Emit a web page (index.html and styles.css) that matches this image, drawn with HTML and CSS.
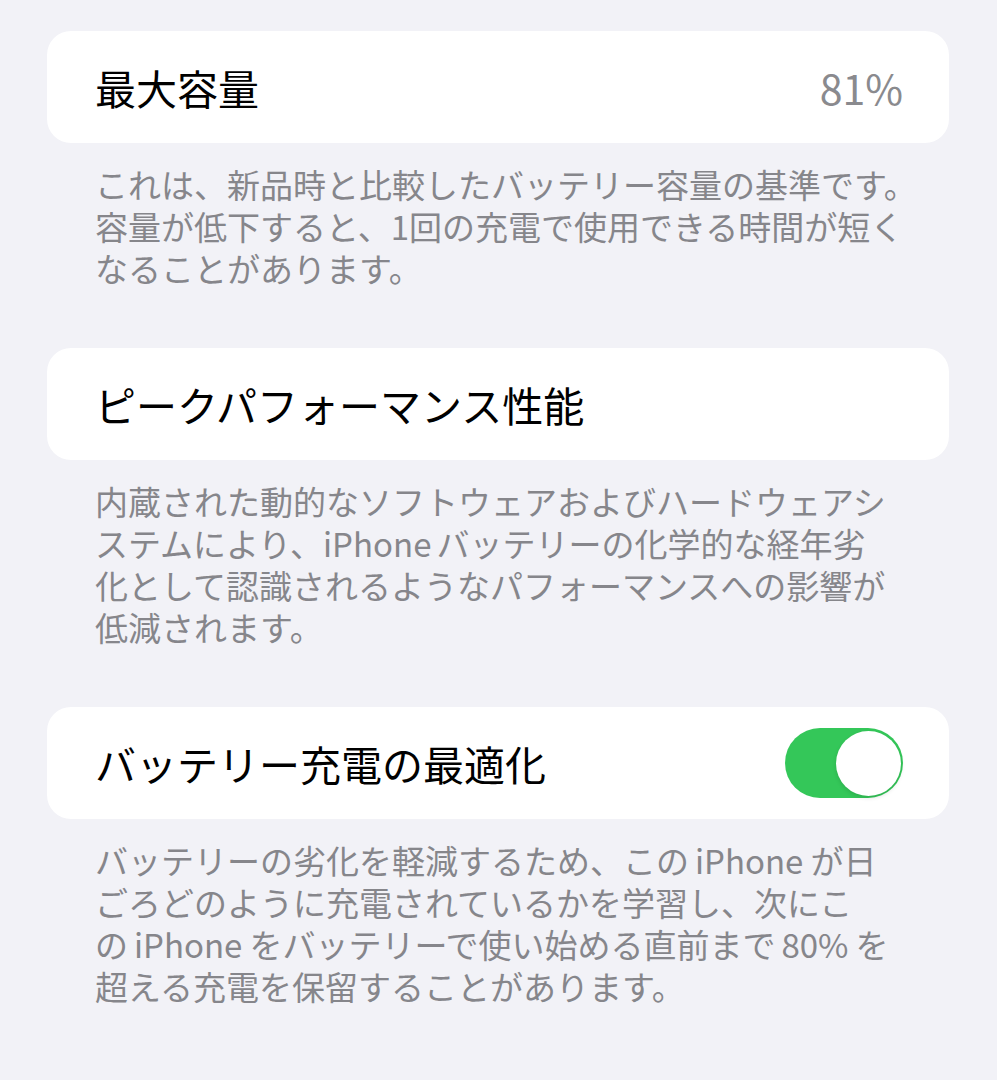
FILE: index.html
```html
<!DOCTYPE html>
<html lang="ja">
<head>
    <meta charset="UTF-8">
    <meta name="viewport" content="width=device-width, initial-scale=1.0">
    <title>バッテリーの状態</title>
    <link rel="stylesheet" href="styles.css">
</head>
<body>
    <div class="page">
        <div class="group">
            <div class="cell">
                <span class="cell-label">最大容量</span>
                <span class="cell-value">81%</span>
            </div>
            <p class="footer">これは、新品時と比較したバッテリー容量の基準です。<br>容量が低下すると、1回の充電で使用できる時間が短く<br>なることがあります。</p>
        </div>

        <div class="group">
            <div class="cell">
                <span class="cell-label">ピークパフォーマンス性能</span>
            </div>
            <p class="footer">内蔵された動的なソフトウェアおよびハードウェアシ<br>ステムにより、<span class="lat no-left">iPhone</span>バッテリーの化学的な経年劣<br>化として認識されるようなパフォーマンスへの影響が<br>低減されます。</p>
        </div>

        <div class="group">
            <div class="cell">
                <span class="cell-label">バッテリー充電の最適化</span>
                <span class="switch on"><span class="knob"></span></span>
            </div>
            <p class="footer">バッテリーの劣化を軽減するため、この<span class="lat">iPhone</span>が日<br>ごろどのように充電されているかを学習し、次にこ<br>の<span class="lat">iPhone</span>をバッテリーで使い始める直前まで<span class="lat">80%</span>を<br>超える充電を保留することがあります。</p>
        </div>
    </div>
</body>
</html>
```

FILE: styles.css
```css
body {
    margin: 0;
    background-color: #f2f2f7;
    font-family: "Noto Sans CJK JP", "Noto Sans", sans-serif;
}
.page {
    padding: 31px 48px 0 47px;
}
.group {
    margin-bottom: 59px;
}
.cell {
    display: flex;
    align-items: center;
    justify-content: space-between;
    height: 112px;
    padding: 0 46px 0 48px;
    background-color: #fff;
    border-radius: 24px;
}
.cell-label {
    font-size: 41px;
    color: #000;
    white-space: nowrap;
}
.cell-value {
    font-size: 41px;
    color: #8a8a8e;
}
.footer {
    margin: 0;
    padding: 20px 48px 0 48px;
    font-size: 33px;
    line-height: 42px;
    color: #86868b;
    white-space: nowrap;
}
/* 和文と欧文の間のアキ */
.lat {
    display: inline-block;
    margin: 0 7px 0 6px;
}
.lat.no-left {
    margin-left: 0;
    margin-right: 5px;
}
.switch {
    display: flex;
    align-items: center;
    justify-content: flex-end;
    width: 118px;
    height: 70px;
    padding: 0 2px;
    box-sizing: border-box;
    border-radius: 35px;
    background-color: #e9e9eb;
}
.switch.on {
    background-color: #34c759;
}
.knob {
    width: 65px;
    height: 65px;
    border-radius: 50%;
    background-color: #fff;
    box-shadow: 0 2px 4px rgba(0, 0, 0, 0.12);
}
```
